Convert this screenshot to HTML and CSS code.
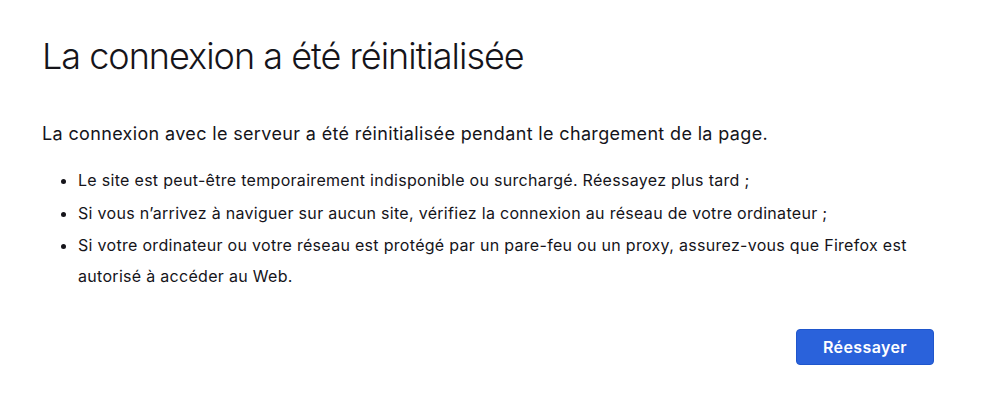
FILE: index.html
```html
<!DOCTYPE html>
<html lang="fr">
<head>
    <meta charset="UTF-8">
    <meta name="viewport" content="width=device-width, initial-scale=1.0">
    <title>Problème de chargement de la page</title>
    <link rel="stylesheet" href="styles.css">
</head>
<body>

<main class="container">
    <h1 class="title">La connexion a été réinitialisée</h1>

    <div class="description">
        <p>La connexion avec le serveur a été réinitialisée pendant le chargement de la page.</p>
        <ul>
            <li>Le site est peut-être temporairement indisponible ou surchargé. Réessayez plus tard ;</li>
            <li>Si vous n’arrivez à naviguer sur aucun site, vérifiez la connexion au réseau de votre ordinateur ;</li>
            <li>Si votre ordinateur ou votre réseau est protégé par un pare-feu ou un proxy, assurez-vous que Firefox est autorisé à accéder au Web.</li>
        </ul>
    </div>

    <div class="actions">
        <button class="primary" id="retry">Réessayer</button>
    </div>
</main>

</body>
</html>
```

FILE: styles.css
```css
body {
    font-family: 'Inter', 'Liberation Sans', sans-serif;
    margin: 0;
    padding: 0;
    background-color: #fff;
    color: #15141a;
}

.container {
    width: 892px;
    padding: 34px 0 0 42px;
}

.title {
    font-size: 36px;
    font-weight: 300;
    line-height: 44px;
    letter-spacing: -1px;
    margin: 0;
}

.description p {
    font-size: 18px;
    line-height: 24px;
    letter-spacing: 0.35px;
    margin: 44px 0 0;
}

.description ul {
    margin: 19px 0 0;
    padding-left: 36px;
}

.description li {
    font-size: 16px;
    line-height: 31px;
    letter-spacing: 0.3px;
    margin-bottom: 1.5px;
}

.actions {
    display: flex;
    justify-content: flex-end;
    margin-top: 37px;
}

.primary {
    font-family: inherit;
    font-size: 16px;
    font-weight: 600;
    letter-spacing: 0.4px;
    color: #fff;
    background-color: #2a62db;
    border: 1px solid #1f56cc;
    border-radius: 4px;
    width: 138px;
    height: 36px;
    cursor: pointer;
}

.primary:hover {
    background-color: #2451bd;
}
```
